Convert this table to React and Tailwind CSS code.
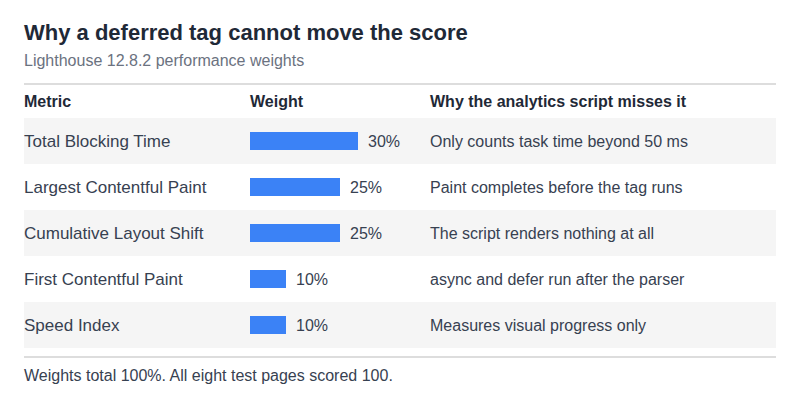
import React from 'react';

const rows = [
  { metric: 'Total Blocking Time', weight: 30, why: 'Only counts task time beyond 50 ms' },
  { metric: 'Largest Contentful Paint', weight: 25, why: 'Paint completes before the tag runs' },
  { metric: 'Cumulative Layout Shift', weight: 25, why: 'The script renders nothing at all' },
  { metric: 'First Contentful Paint', weight: 10, why: 'async and defer run after the parser' },
  { metric: 'Speed Index', weight: 10, why: 'Measures visual progress only' },
];

export default function App() {
  return (
    <div
      className="w-[800px] h-[400px] bg-white px-6 pt-[19px]"
      style={{ fontFamily: '"Liberation Sans", Arial, sans-serif' }}
    >
      <h2 className="text-[22px] leading-[28px] font-bold text-[#1f2937]">
        Why a deferred tag cannot move the score
      </h2>
      <p className="mt-[4px] text-[16px] leading-[20px] text-[#6b7280]">
        Lighthouse 12.8.2 performance weights
      </p>

      <table className="mt-3 w-full border-t-2 border-[#dddddd] text-[16px] text-[#374151] border-collapse">
        <thead>
          <tr className="h-[34px]">
            <th className="w-[226px] text-left font-bold text-[#1f2937]">Metric</th>
            <th className="w-[180px] text-left font-bold text-[#1f2937]">Weight</th>
            <th className="text-left font-bold text-[#1f2937]">Why the analytics script misses it</th>
          </tr>
        </thead>
        <tbody>
          {rows.map((r, i) => (
            <tr key={r.metric} className={`h-[46px] ${i % 2 === 0 ? 'bg-[#f5f5f5]' : 'bg-white'}`}>
              <td className="text-[17px] pt-[2px]">{r.metric}</td>
              <td>
                <div className="flex items-center gap-[10px]">
                  <div className="h-[18px] bg-[#3b82f6]" style={{ width: `${r.weight * 3.6}px` }} />
                  <span className="pt-[2px]">{r.weight}%</span>
                </div>
              </td>
              <td className="pt-[2px]">{r.why}</td>
            </tr>
          ))}
        </tbody>
      </table>

      <div className="mt-2 border-t-2 border-[#dddddd] pt-[8px] text-[16px] leading-[20px] text-[#374151]">
        Weights total 100%. All eight test pages scored 100.
      </div>
    </div>
  );
}
